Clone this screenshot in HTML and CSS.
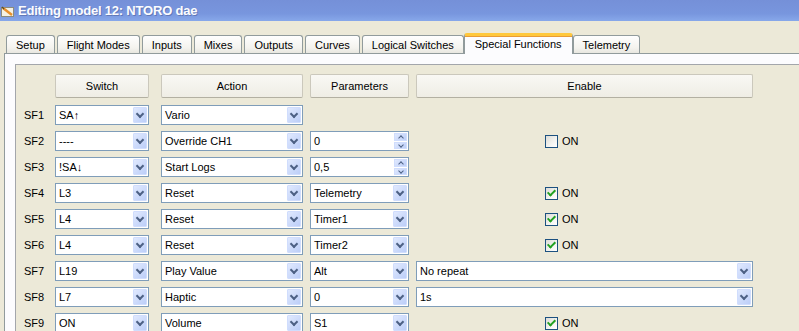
FILE: index.html
```html
<!DOCTYPE html>
<html lang="en">
  <head>
    <meta charset="UTF-8" />
    <title>Editing model 12: NTORO dae</title>
    <link rel="stylesheet" href="styles.css">
  </head>
  <body>
    <div class="titlebar">
      <svg class="app-icon" width="14" height="13" viewBox="0 0 14 13">
        <rect x="0.5" y="2.5" width="12" height="9" fill="#f4f1e4" stroke="#8c8c7c" />
        <path d="M2 3 L11 10" stroke="#e8902c" stroke-width="2.4" />
        <path d="M1 2 L3 4" stroke="#5a4a2a" stroke-width="1.5" />
      </svg>
      <span class="title">Editing model 12: NTORO dae</span>
    </div>

    <div class="tabs">
      <div class="tab">Setup</div>
      <div class="tab">Flight Modes</div>
      <div class="tab">Inputs</div>
      <div class="tab">Mixes</div>
      <div class="tab">Outputs</div>
      <div class="tab">Curves</div>
      <div class="tab">Logical Switches</div>
      <div class="tab active">Special Functions</div>
      <div class="tab">Telemetry</div>
    </div>

    <div class="pane">
      <div class="scroll">
        <div class="grid">
          <div></div>
          <div class="head">Switch</div>
          <div class="head action">Action</div>
          <div class="head">Parameters</div>
          <div class="head">Enable</div>

          <!-- SF1 -->
          <div class="label">SF1</div>
          <div class="combo"><span>SA↑</span><i class="drop"></i></div>
          <div class="combo action"><span>Vario</span><i class="drop"></i></div>
          <div></div>
          <div></div>

          <!-- SF2 -->
          <div class="label">SF2</div>
          <div class="combo"><span>----</span><i class="drop"></i></div>
          <div class="combo action"><span>Override CH1</span><i class="drop"></i></div>
          <div class="combo"><span>0</span><i class="updown"><b class="up"></b><b class="down"></b></i></div>
          <div class="check"><i class="box"></i>ON</div>

          <!-- SF3 -->
          <div class="label">SF3</div>
          <div class="combo"><span>!SA↓</span><i class="drop"></i></div>
          <div class="combo action"><span>Start Logs</span><i class="drop"></i></div>
          <div class="combo"><span>0,5</span><i class="updown"><b class="up"></b><b class="down"></b></i></div>
          <div></div>

          <!-- SF4 -->
          <div class="label">SF4</div>
          <div class="combo"><span>L3</span><i class="drop"></i></div>
          <div class="combo action"><span>Reset</span><i class="drop"></i></div>
          <div class="combo"><span>Telemetry</span><i class="drop"></i></div>
          <div class="check"><i class="box on"></i>ON</div>

          <!-- SF5 -->
          <div class="label">SF5</div>
          <div class="combo"><span>L4</span><i class="drop"></i></div>
          <div class="combo action"><span>Reset</span><i class="drop"></i></div>
          <div class="combo"><span>Timer1</span><i class="drop"></i></div>
          <div class="check"><i class="box on"></i>ON</div>

          <!-- SF6 -->
          <div class="label">SF6</div>
          <div class="combo"><span>L4</span><i class="drop"></i></div>
          <div class="combo action"><span>Reset</span><i class="drop"></i></div>
          <div class="combo"><span>Timer2</span><i class="drop"></i></div>
          <div class="check"><i class="box on"></i>ON</div>

          <!-- SF7 -->
          <div class="label">SF7</div>
          <div class="combo"><span>L19</span><i class="drop"></i></div>
          <div class="combo action"><span>Play Value</span><i class="drop"></i></div>
          <div class="combo"><span>Alt</span><i class="drop"></i></div>
          <div class="combo"><span>No repeat</span><i class="drop"></i></div>

          <!-- SF8 -->
          <div class="label">SF8</div>
          <div class="combo"><span>L7</span><i class="drop"></i></div>
          <div class="combo action"><span>Haptic</span><i class="drop"></i></div>
          <div class="combo"><span>0</span><i class="drop"></i></div>
          <div class="combo"><span>1s</span><i class="drop"></i></div>

          <!-- SF9 -->
          <div class="label">SF9</div>
          <div class="combo"><span>ON</span><i class="drop"></i></div>
          <div class="combo action"><span>Volume</span><i class="drop"></i></div>
          <div class="combo"><span>S1</span><i class="drop"></i></div>
          <div class="check"><i class="box on"></i>ON</div>
        </div>
      </div>
    </div>
  </body>
</html>
```

FILE: styles.css
```css
* {
  box-sizing: border-box;
}

html,
body {
  overflow: hidden;
}

body {
  margin: 0;
  width: 799px;
  height: 331px;
  background: #ece9d8;
  font-family: "Liberation Sans", Arial, sans-serif;
  font-size: 11px;
  color: #000;
}

/* Window title */
.titlebar {
  height: 21px;
  display: flex;
  align-items: center;
  padding-left: 1px;
  background: linear-gradient(#7590d8, #7896de 65%, #87a8ea);
}

.app-icon {
  margin-top: 1px;
}

.title {
  margin-left: 3px;
  color: #fbfcff;
  font-size: 13px;
  font-weight: bold;
  letter-spacing: -0.2px;
  text-shadow: 1px 1px #6279b8;
}

/* Tab strip */
.tabs {
  height: 32px;
  display: flex;
  align-items: flex-end;
  gap: 2px;
  padding-left: 6px;
}

.tab {
  height: 18px;
  padding: 0 9px;
  display: flex;
  align-items: center;
  border: 1px solid #919b9c;
  border-bottom: none;
  border-radius: 3px 3px 0 0;
  background: linear-gradient(#fefefe, #f4f3ee 70%, #e8e7e0);
  white-space: nowrap;
}

.tab.active {
  position: relative;
  z-index: 1;
  height: 21px;
  margin: 0 -2px -1px;
  padding: 0 10px 2px;
  border-top: 3px solid #ffc83c;
  box-shadow: inset 0 1px #e89b36;
  background: #fcfcfe;
}

.pane {
  width: 796px;
  height: 279px;
  margin-left: 4px;
  padding: 10px 0 0 10px;
  overflow: hidden;
  border: 1px solid #919b9c;
  background: #fcfcfe;
}

.scroll {
  width: 800px;
  height: 300px;
  padding-top: 9px;
  border: 1px solid #a3a6ab;
  background: #ece9d8;
}

/* Function table */
.grid {
  display: grid;
  grid-template-columns: 32px 94px 147px 99px 337px;
  grid-template-rows: 25px;
  grid-auto-rows: 20px;
  gap: 6px 7px;
}

.action {
  margin-left: 5px;
}

.head {
  height: 24px;
  display: flex;
  align-items: center;
  justify-content: center;
  border: 1px solid #cbc8bc;
  border-bottom-color: #b3b0a2;
  border-radius: 2px;
  background: linear-gradient(#f9f8f4, #efede5);
}

.label {
  display: flex;
  align-items: center;
  padding-left: 8px;
}

.combo {
  display: flex;
  align-items: center;
  padding: 1px 1px 1px 3px;
  border: 1px solid #7f9db9;
  background: #fff;
}

.combo span {
  flex: 1;
  white-space: nowrap;
}

.drop {
  width: 14px;
  height: 16px;
  display: flex;
  align-items: center;
  justify-content: center;
  border: 1px solid #d0ddfd;
  border-radius: 1px;
  background: linear-gradient(135deg, #e0e9fe, #bccef8);
}

.drop::after {
  content: "";
  width: 4px;
  height: 4px;
  margin-top: -3px;
  border-right: 2px solid #4d6185;
  border-bottom: 2px solid #4d6185;
  transform: rotate(45deg);
}

.updown {
  width: 13px;
  height: 16px;
  display: flex;
  flex-direction: column;
  gap: 1px;
}

.updown b {
  flex: 1;
  display: flex;
  align-items: center;
  justify-content: center;
  border: 1px solid #d0ddfd;
  background: linear-gradient(135deg, #e0e9fe, #bccef8);
}

.updown b::after {
  content: "";
  width: 3px;
  height: 3px;
  border-left: 1.5px solid #4d6185;
  border-top: 1.5px solid #4d6185;
}

.updown .up::after {
  margin-top: 2px;
  transform: rotate(45deg);
}

.updown .down::after {
  margin-top: -2px;
  transform: rotate(225deg);
}

.check {
  display: flex;
  align-items: center;
  gap: 4px;
  padding-left: 129px;
}

.box {
  width: 13px;
  height: 13px;
  display: flex;
  align-items: center;
  justify-content: center;
  border: 1px solid #1c5180;
  background: linear-gradient(135deg, #dcdcd7, #f4f4f1 60%, #fff);
}

.box.on::after {
  content: "";
  width: 3px;
  height: 6px;
  margin-top: -2px;
  border-right: 2px solid #21a121;
  border-bottom: 2px solid #21a121;
  transform: rotate(45deg);
}
```
